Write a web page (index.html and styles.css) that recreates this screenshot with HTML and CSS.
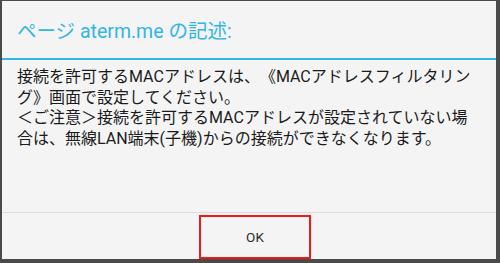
FILE: index.html
```html
<!DOCTYPE html>
<html lang="ja">
<head>
<meta charset="utf-8">
<link rel="stylesheet" href="styles.css">
</head>
<body>
<div class="dialog">
  <div class="title">ページ aterm.me の記述:</div>
  <div class="divider"></div>
  <div class="message">接続を許可するMACアドレスは、《MACアドレスフィルタリング》画面で設定してください。<br>＜ご注意＞接続を許可するMACアドレスが設定されていない場合は、無線LAN端末(子機)からの接続ができなくなります。</div>
  <div class="buttons">
    <div class="ok">OK</div>
  </div>
</div>
</body>
</html>
```
FILE: styles.css
```css
html, body {
  margin: 0;
  padding: 0;
  background: #4a4a4a;
  width: 500px;
  height: 263px;
  overflow: hidden;
}
.dialog {
  margin: 1px 4px 0 2px;
  height: 258px;
  background: #f4f4f4;
  display: flex;
  flex-direction: column;
  font-family: Roboto, "Noto Sans CJK JP", sans-serif;
  text-spacing-trim: space-all;
}
.title {
  height: 57px;
  display: flex;
  align-items: center;
  padding-left: 15px;
  color: #33b5e5;
  font-size: 19.5px;
}
.divider {
  height: 2px;
  background: #33b5e5;
}
.message {
  flex: 1;
  padding: 7px 20px 0 15px;
  font-size: 16px;
  line-height: 20.5px;
  color: #1b1b1b;
}
.buttons {
  border-top: 1px solid #dcdcdc;
  height: 47px;
  display: flex;
  justify-content: center;
  align-items: flex-start;
  padding-top: 2px;
  padding-left: 12px;
  box-sizing: border-box;
}
.ok {
  width: 112px;
  height: 44px;
  border: 2px solid #f01818;
  box-sizing: border-box;
  display: flex;
  align-items: center;
  justify-content: center;
  font-size: 13.5px;
  color: #2a2a2a;
}
```
